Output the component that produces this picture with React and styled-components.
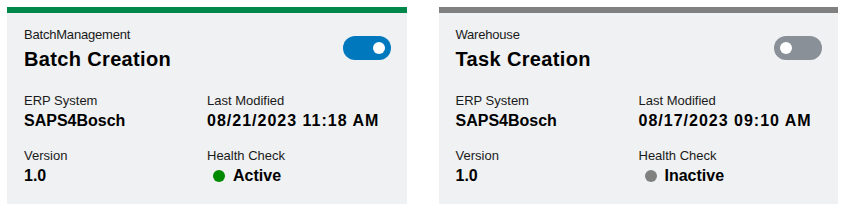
import styled, { createGlobalStyle } from "styled-components";

const GlobalStyle = createGlobalStyle`
  body {
    margin: 0;
    background: #ffffff;
    font-family: "Liberation Sans", Arial, sans-serif;
    color: #000000;
  }
`;

const Page = styled.div`
  display: flex;
  gap: 32px;
  padding: 7px;
`;

const Card = styled.div`
  width: 400px;
  box-sizing: border-box;
  background: #eff1f2;
  border-top: 6px solid ${(props) => props.$accent};
  padding: 13px 16px 17px 17px;
`;

const Header = styled.div`
  display: flex;
  justify-content: space-between;
  align-items: flex-start;
`;

const Category = styled.div`
  font-size: 13px;
  line-height: 18px;
  color: #1a1a1a;
  letter-spacing: -0.2px;
`;

const Title = styled.div`
  margin-top: 2px;
  font-size: 20px;
  line-height: 26px;
  font-weight: 700;
  letter-spacing: 0.35px;
`;

const Toggle = styled.div`
  width: 48px;
  height: 24px;
  margin-top: 10px;
  border-radius: 12px;
  background: ${(props) => (props.$on ? "#0078be" : "#8a9097")};
  display: flex;
  align-items: center;
  justify-content: ${(props) => (props.$on ? "flex-end" : "flex-start")};
  padding: 0 6px;
  box-sizing: border-box;
`;

const Knob = styled.span`
  width: 12px;
  height: 12px;
  border-radius: 50%;
  background: #ffffff;
`;

const InfoGrid = styled.div`
  margin-top: 20px;
  display: grid;
  grid-template-columns: 183px 1fr;
  row-gap: 15px;
`;

const Label = styled.div`
  font-size: 13px;
  line-height: 18px;
  color: #1a1a1a;
`;

const Value = styled.div`
  font-size: 16px;
  line-height: 22px;
  font-weight: 700;
  letter-spacing: ${(props) => (props.$numeric ? "1px" : "0")};
  display: flex;
  align-items: center;
  gap: 8px;
`;

const Status = styled(Value)`
  padding-left: 6px;
`;

const Dot = styled.span`
  width: 12px;
  height: 12px;
  border-radius: 50%;
  background: ${(props) => (props.$active ? "#008a00" : "#808080")};
`;

const services = [
  {
    category: "BatchManagement",
    title: "Batch Creation",
    erp: "SAPS4Bosch",
    modified: "08/21/2023 11:18 AM",
    version: "1.0",
    active: true,
  },
  {
    category: "Warehouse",
    title: "Task Creation",
    erp: "SAPS4Bosch",
    modified: "08/17/2023 09:10 AM",
    version: "1.0",
    active: false,
  },
];

function ServiceCard({ item }) {
  return (
    <Card $accent={item.active ? "#00884a" : "#808080"}>
      <Header>
        <div>
          <Category>{item.category}</Category>
          <Title>{item.title}</Title>
        </div>
        <Toggle $on={item.active}>
          <Knob />
        </Toggle>
      </Header>
      <InfoGrid>
        <div>
          <Label>ERP System</Label>
          <Value>{item.erp}</Value>
        </div>
        <div>
          <Label>Last Modified</Label>
          <Value $numeric>{item.modified}</Value>
        </div>
        <div>
          <Label>Version</Label>
          <Value>{item.version}</Value>
        </div>
        <div>
          <Label>Health Check</Label>
          <Status>
            <Dot $active={item.active} />
            {item.active ? "Active" : "Inactive"}
          </Status>
        </div>
      </InfoGrid>
    </Card>
  );
}

function App() {
  return (
    <Page>
      <GlobalStyle />
      {services.map((item) => (
        <ServiceCard key={item.title} item={item} />
      ))}
    </Page>
  );
}

export default App;
